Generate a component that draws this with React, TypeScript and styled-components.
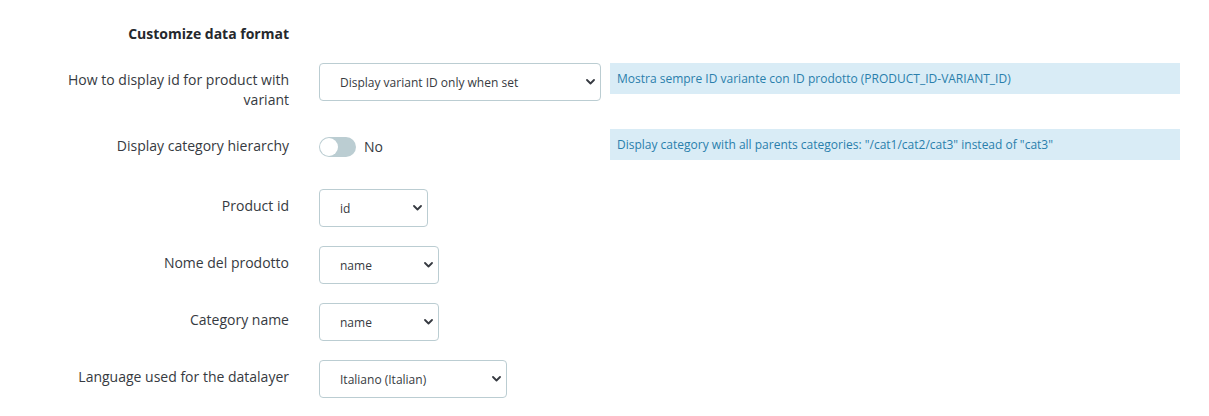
import styled, { createGlobalStyle } from "styled-components";

const GlobalStyle = createGlobalStyle`
  html, body {
    margin: 0;
    padding: 0;
    background: #fff;
  }
  body {
    font-family: "Open Sans", "Liberation Sans", sans-serif;
    color: #363a41;
  }
`;

const Form = styled.div`
  display: flex;
  flex-direction: column;
  gap: 19px;
  padding: 24px 29px 0 0;
`;

const Row = styled.div<{ $minHeight?: number }>`
  display: grid;
  grid-template-columns: 290px 1fr;
  column-gap: 29px;
  align-items: start;
  min-height: ${(p) => (p.$minHeight ? `${p.$minHeight}px` : "auto")};
`;

const Heading = styled.h3`
  grid-column: 1;
  margin: 0;
  padding-right: 1px;
  text-align: right;
  font-size: 14px;
  font-weight: 700;
  line-height: 20px;
  color: #25282d;
`;

const Label = styled.label`
  padding: 7px 1px 0 40px;
  text-align: right;
  font-size: 14px;
  line-height: 20px;
  color: #363a41;
`;

const Field = styled.div`
  display: flex;
  align-items: flex-start;
`;

const Slot = styled.div`
  width: 282px;
  flex-shrink: 0;
  display: flex;
  align-items: center;
`;

const SelectWrap = styled.div<{ $width: number }>`
  position: relative;
  width: ${(p) => p.$width}px;
  height: 38px;
`;

const Select = styled.select`
  appearance: none;
  -webkit-appearance: none;
  width: 100%;
  height: 100%;
  box-sizing: border-box;
  padding: 0 24px 0 20px;
  border: 1px solid #bbcdd2;
  border-radius: 4px;
  background: #fff;
  font-family: "Open Sans", "Liberation Sans", sans-serif;
  font-size: 12px;
  color: #363a41;
  outline: none;
`;

const Chevron = styled.svg`
  position: absolute;
  right: 6px;
  top: 50%;
  margin-top: -3px;
  width: 9px;
  height: 6px;
  pointer-events: none;
`;

const SwitchRow = styled.div`
  display: flex;
  align-items: center;
  gap: 8px;
  padding-top: 8px;
`;

const Track = styled.span`
  position: relative;
  display: inline-block;
  width: 37px;
  height: 20px;
  border-radius: 10px;
  background: #bbcdd2;
`;

const Knob = styled.span`
  position: absolute;
  left: 1px;
  top: 1px;
  width: 18px;
  height: 18px;
  border-radius: 50%;
  background: #fff;
`;

const SwitchText = styled.span`
  font-size: 14px;
  line-height: 20px;
  color: #363a41;
`;

const HelpBox = styled.div`
  flex: 1;
  margin-left: 9px;
  height: 31px;
  display: flex;
  align-items: center;
  padding: 0 7px;
  background: #d9ecf6;
  color: #2a7fac;
  font-size: 12px;
  line-height: 16px;
`;

function Dropdown({ width, value }: { width: number; value: string }) {
  return (
    <SelectWrap $width={width}>
      <Select defaultValue={value}>
        <option value={value}>{value}</option>
      </Select>
      <Chevron viewBox="0 0 9 6">
        <path d="M1 1l3.5 3.5L8 1" fill="none" stroke="#363a41" strokeWidth="1.8" strokeLinecap="round" strokeLinejoin="round" />
      </Chevron>
    </SelectWrap>
  );
}

export default function App() {
  return (
    <>
      <GlobalStyle />
      <Form>
        <Row>
          <Heading>Customize data format</Heading>
        </Row>

        <Row>
          <Label>How to display id for product with variant</Label>
          <Field>
            <Slot>
              <Dropdown width={282} value="Display variant ID only when set" />
            </Slot>
            <HelpBox>Mostra sempre ID variante con ID prodotto (PRODUCT_ID-VARIANT_ID)</HelpBox>
          </Field>
        </Row>

        <Row $minHeight={41}>
          <Label>Display category hierarchy</Label>
          <Field>
            <Slot>
              <SwitchRow>
                <Track>
                  <Knob />
                </Track>
                <SwitchText>No</SwitchText>
              </SwitchRow>
            </Slot>
            <HelpBox>Display category with all parents categories: "/cat1/cat2/cat3" instead of "cat3"</HelpBox>
          </Field>
        </Row>

        <Row>
          <Label>Product id</Label>
          <Field>
            <Dropdown width={109} value="id" />
          </Field>
        </Row>

        <Row>
          <Label>Nome del prodotto</Label>
          <Field>
            <Dropdown width={120} value="name" />
          </Field>
        </Row>

        <Row>
          <Label>Category name</Label>
          <Field>
            <Dropdown width={120} value="name" />
          </Field>
        </Row>

        <Row>
          <Label>Language used for the datalayer</Label>
          <Field>
            <Dropdown width={188} value="Italiano (Italian)" />
          </Field>
        </Row>
      </Form>
    </>
  );
}
